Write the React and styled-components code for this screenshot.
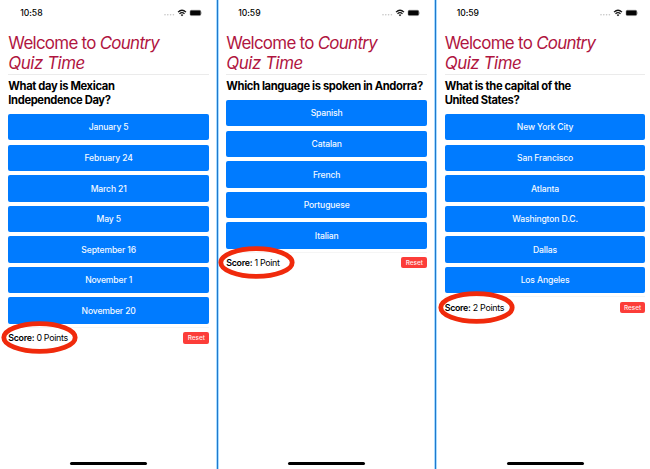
import React from "react";
import styled, { createGlobalStyle } from "styled-components";

const Global = createGlobalStyle`
  * { box-sizing: border-box; }
  html, body { margin: 0; background: #fff; overflow: hidden; }
`;

const Screens = styled.main`
  display: grid;
  grid-template-columns: 216px 3px 215px 3px 1fr;
  width: 650px;
  height: 469px;
  background: #fff;
  color: #000;
  font-family: Inter, "Liberation Sans", sans-serif;
`;

const Divider = styled.div`
  background: #2079cd;
  border: solid #a9dcff;
  border-width: 0 1px;
`;

const Phone = styled.section`
  display: flex;
  flex-direction: column;
  padding-left: ${(p) => p.$inset}px;
  min-width: 0;
`;

const Content = styled.div`
  display: flex;
  flex-direction: column;
  flex: 1;
  width: 200.7px;
`;

const StatusBar = styled.header`
  display: flex;
  justify-content: space-between;
  align-items: center;
  height: 25px;
  padding: 0 7px 0 12px;
`;

const Clock = styled.span`
  font-size: 8.6px;
  font-weight: 500;
  letter-spacing: -0.05px;
  white-space: nowrap;
`;

const Title = styled.h1`
  margin: 7.6px 0 0;
  height: 41.4px;
  font-size: 16.9px;
  line-height: 20.6px;
  font-weight: 400;
  letter-spacing: -0.7px;
  color: #b0153f;
  white-space: nowrap;
`;

const TitleEnd = styled.em`
  letter-spacing: -0.45px;
`;

const Rule = styled.hr`
  width: 100%;
  height: 1px;
  margin: ${(p) => p.$gap || 0}px 0 0;
  border: 0;
  background: ${(p) => p.$tone || "#ebebeb"};
`;

const Question = styled.h2`
  margin: 4px 0 7px;
  font-size: 11.2px;
  line-height: 14px;
  font-weight: 700;
  letter-spacing: -0.36px;
  white-space: nowrap;
`;

const Answers = styled.div`
  display: flex;
  flex-direction: column;
  gap: 4.2px;
`;

const Answer = styled.button`
  height: 26.4px;
  padding: 0.5px 0 0;
  border: 0;
  border-radius: 2px;
  background: #007bff;
  color: #f3f9ff;
  font: 500 8.6px/26px Inter, "Liberation Sans", sans-serif;
  letter-spacing: -0.15px;
`;

const Footer = styled.footer`
  display: flex;
  justify-content: space-between;
  align-items: center;
  height: 20px;
`;

const Score = styled.div`
  position: relative;
  font-size: 8.9px;
  letter-spacing: -0.31px;
  white-space: nowrap;
`;

const Label = styled.b`
  font-weight: 600;
`;

const Circle = styled.svg`
  position: absolute;
  left: ${(p) => p.$left}px;
  top: -11px;
  width: 76px;
  height: 33px;
  overflow: visible;
`;

const Reset = styled.button`
  display: flex;
  align-items: center;
  justify-content: center;
  width: 25.5px;
  height: 11.5px;
  padding: 1px 0 0;
  border: 0;
  border-radius: 2px;
  background: #fc3d39;
  color: #ffefee;
  font: 500 6.4px/10px Inter, "Liberation Sans", sans-serif;
`;

const HomeIndicator = styled.div`
  width: 77px;
  height: 2.8px;
  margin: auto auto 4.2px;
  border-radius: 2px;
  background: #000;
`;

const StatusIcons = () => (
  <svg width="38" height="10" viewBox="0 0 38 10" aria-hidden="true">
    <g fill="#c4c4c4">
      <circle cx="1" cy="6.7" r=".8" />
      <circle cx="3.8" cy="6.7" r=".8" />
      <circle cx="6.6" cy="6.7" r=".8" />
      <circle cx="9.4" cy="6.7" r=".8" />
    </g>
    <g fill="none" stroke="#111" strokeWidth="1.25">
      <path d="M14 4.1Q18 .4 22 4.1" />
      <path d="M15.5 5.8Q18 3.5 20.5 5.8" />
    </g>
    <path d="M16.7 6.9Q18 5.8 19.3 6.9L18 8.2Z" fill="#111" />
    <rect x="26" y="2.2" width="10.8" height="5.4" rx="1.4" fill="#050505" stroke="#888" strokeWidth=".5" />
    <path d="M37.3 4v2q.7-.3.7-1T37.3 4" fill="#999" />
  </svg>
);

const phones = [
  { time: "10:58", inset: 8.3, circle: -7.7, score: "0 Points", question: ["What day is Mexican", "Independence Day?"],
    answers: ["January 5", "February 24", "March 21", "May 5", "September 16", "November 1", "November 20"] },
  { time: "10:59", inset: 7.3, circle: -8.6, score: "1 Point", question: ["Which language is spoken in Andorra?"],
    answers: ["Spanish", "Catalan", "French", "Portuguese", "Italian"] },
  { time: "10:59", inset: 7.7, circle: -7, score: "2 Points", question: ["What is the capital of the", "United States?"],
    answers: ["New York City", "San Francisco", "Atlanta", "Washington D.C.", "Dallas", "Los Angeles"] },
];

const QuizScreen = ({ quiz }) => (
  <Phone $inset={quiz.inset}>
    <Content>
      <StatusBar>
        <Clock>{quiz.time}</Clock>
        <StatusIcons />
      </StatusBar>
      <Title>Welcome to <em>Country</em><br /><TitleEnd>Quiz Time</TitleEnd></Title>
      <Rule />
      <Question>
        {quiz.question.map((line) => <div key={line}>{line}</div>)}
      </Question>
      <Answers>
        {quiz.answers.map((answer) => <Answer key={answer}>{answer}</Answer>)}
      </Answers>
      <Rule $gap={3} $tone="#f5f5f5" />
      <Footer>
        <Score>
          <Label>Score:</Label> {quiz.score}
          <Circle $left={quiz.circle} viewBox="0 0 76 33">
            <ellipse cx="38.5" cy="16.5" rx="35.7" ry="13.9" fill="none" stroke="#f02a0c" strokeWidth="4.8" />
          </Circle>
        </Score>
        <Reset>Reset</Reset>
      </Footer>
      <HomeIndicator />
    </Content>
  </Phone>
);

export default function App() {
  return (
    <>
      <Global />
      <Screens>
        {phones.map((quiz, i) => (
          <React.Fragment key={i}>
            {i > 0 && <Divider />}
            <QuizScreen quiz={quiz} />
          </React.Fragment>
        ))}
      </Screens>
    </>
  );
}
